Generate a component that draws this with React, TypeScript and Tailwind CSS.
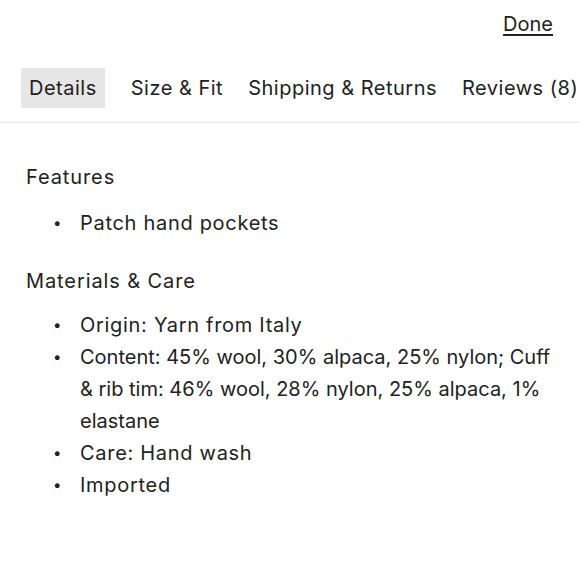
import React from 'react';

const tabs = ['Details', 'Size & Fit', 'Shipping & Returns', 'Reviews (8)'];

const features = ['Patch hand pockets'];

const materials = [
  'Origin: Yarn from Italy',
  'Content: 45% wool, 30% alpaca, 25% nylon; Cuff & rib tim: 46% wool, 28% nylon, 25% alpaca, 1% elastane',
  'Care: Hand wash',
  'Imported',
];

const BulletList: React.FC<{ items: string[] }> = ({ items }) => (
  <ul className="pl-[53px] pr-[24px]">
    {items.map((item) => (
      <li key={item} className="flex leading-[32px]">
        <span className="w-[27px] shrink-0 text-[15px]">•</span>
        {/* the long content line keeps default spacing so it wraps like the original */}
        <span className={item.length > 40 ? '' : 'tracking-[0.7px]'}>{item}</span>
      </li>
    ))}
  </ul>
);

export default function App() {
  return (
    <div
      className="w-[580px] h-[580px] bg-white text-[#222] text-[20px] overflow-hidden"
      style={{ fontFamily: 'Inter, "Noto Sans", sans-serif' }}
    >
      <div className="flex justify-end pr-[27px] pt-[10px] h-[50px]">
        <a href="#" className="underline decoration-[1.5px] underline-offset-[3px] leading-[28px]">
          Done
        </a>
      </div>

      <div className="flex items-center gap-[9px] pl-[21px] pt-[18px] pb-[14px] border-b border-[#e6e6e6] whitespace-nowrap tracking-[0.5px]">
        {tabs.map((tab, i) => (
          <div
            key={tab}
            className={`px-[8px] h-[40px] flex items-center ${i === 0 ? 'bg-[#e6e6e6]' : ''} ${i === 1 ? 'ml-[9px]' : ''}`}
          >
            {tab}
          </div>
        ))}
      </div>

      <div className="pt-[40px]">
        <h3 className="pl-[26px] leading-[28px] tracking-[0.9px]">Features</h3>
        <div className="mt-[16px]">
          <BulletList items={features} />
        </div>
        <h3 className="pl-[26px] leading-[28px] mt-[28px] tracking-[0.9px]">Materials &amp; Care</h3>
        <div className="mt-[14px]">
          <BulletList items={materials} />
        </div>
      </div>
    </div>
  );
}
